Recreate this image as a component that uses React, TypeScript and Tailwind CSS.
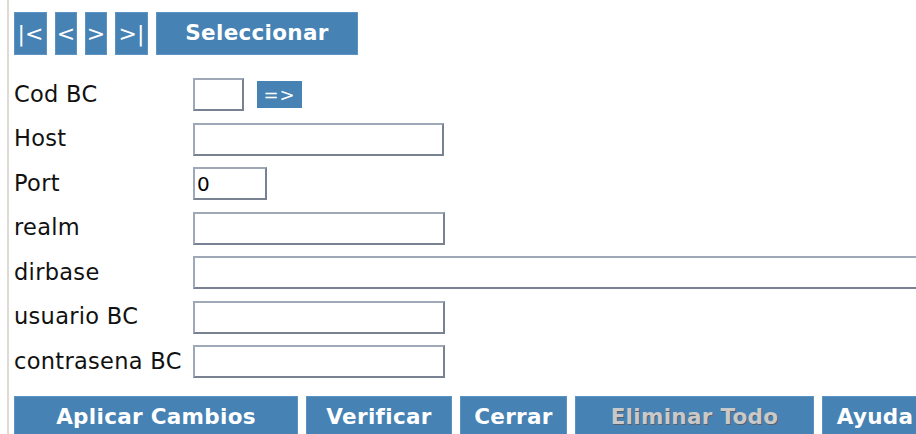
import React from 'react';

const font = { fontFamily: '"DejaVu Sans", Verdana, sans-serif' };

const base = 'h-[43px] shrink-0 bg-[#4682b4] border border-[#5d93c2] flex items-center justify-center';
const btn = `${base} text-white`;

const fields = [
  { label: 'Cod BC', w: 'w-[51px]', go: true },
  { label: 'Host', w: 'w-[251px]' },
  { label: 'Port', w: 'w-[74px]', value: '0' },
  { label: 'realm', w: 'w-[252px]' },
  { label: 'dirbase', w: 'w-[760px]' },
  { label: 'usuario BC', w: 'w-[252px]' },
  { label: 'contrasena BC', w: 'w-[252px]' },
];

const App: React.FC = () => {
  return (
    <div className="w-[916px] h-[434px] overflow-hidden bg-white pl-[7px]" style={font}>
      <div className="h-full border-l-2 border-[#dedbd6] pl-[5px] pt-[12px]">
        {/* navegacion */}
        <div className="flex gap-2 w-max">
          <div className={`${btn} w-[33px] text-[22px]`}>|&lt;</div>
          <div className={`${btn} w-[22px] text-[22px]`}>&lt;</div>
          <div className={`${btn} w-[22px] text-[22px]`}>&gt;</div>
          <div className={`${btn} w-[33px] text-[22px]`}>&gt;|</div>
          <div className={`${btn} w-[202px] text-[21.5px] font-bold tracking-[0.3px]`}>Seleccionar</div>
        </div>

        {/* formulario */}
        <div className="mt-[23px] flex flex-col gap-[11.5px]">
          {fields.map((f) => (
            <div key={f.label} className="flex items-center h-[33px] w-max">
              <span className="w-[179px] shrink-0 text-[22.5px] tracking-[0.3px] text-[#111] whitespace-nowrap">{f.label}</span>
              <input
                readOnly
                value={f.value ?? ''}
                className={`${f.w} h-[33px] shrink-0 bg-white border-2 border-t-[#9ea8b6] border-l-[#9ea8b6] border-b-[#788292] border-r-[#788292] pl-[2px] text-[20px] text-black outline-none`}
                style={font}
              />
              {f.go && (
                <div className="ml-[13px] w-[45px] h-[27px] bg-[#4682b4] text-white text-[18px] flex items-center justify-center tracking-[1px]">
                  =&gt;
                </div>
              )}
            </div>
          ))}
        </div>

        {/* acciones */}
        <div className="mt-[18px] flex gap-2 w-max font-bold text-[21.5px] tracking-[0.3px]">
          <div className={`${btn} w-[284px]`}>Aplicar Cambios</div>
          <div className={`${btn} w-[146px]`}>Verificar</div>
          <div className={`${btn} w-[107px]`}>Cerrar</div>
          <div className={`${base} w-[239px] text-[#c9c9c9] [text-shadow:1px_1px_0_#56606a]`}>Eliminar Todo</div>
          <div className={`${btn} w-[106px]`}>Ayuda</div>
        </div>
      </div>
    </div>
  );
};

export default App;
